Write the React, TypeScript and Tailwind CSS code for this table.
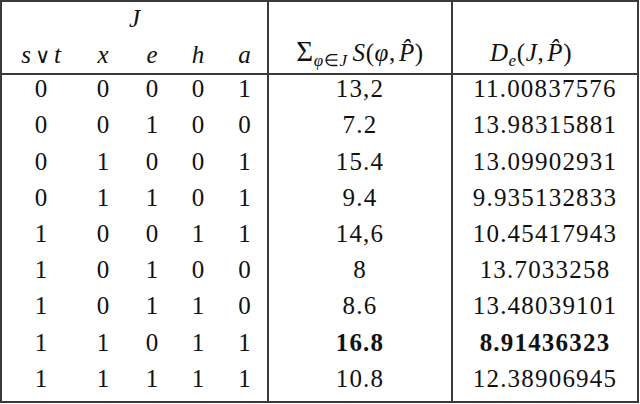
import React from "react";

const rows: { bits: string[]; s: string; d: string; bold?: boolean }[] = [
  { bits: ["0", "0", "0", "0", "1"], s: "13,2", d: "11.00837576" },
  { bits: ["0", "0", "1", "0", "0"], s: "7.2", d: "13.98315881" },
  { bits: ["0", "1", "0", "0", "1"], s: "15.4", d: "13.09902931" },
  { bits: ["0", "1", "1", "0", "1"], s: "9.4", d: "9.935132833" },
  { bits: ["1", "0", "0", "1", "1"], s: "14,6", d: "10.45417943" },
  { bits: ["1", "0", "1", "0", "0"], s: "8", d: "13.7033258" },
  { bits: ["1", "0", "1", "1", "0"], s: "8.6", d: "13.48039101" },
  { bits: ["1", "1", "0", "1", "1"], s: "16.8", d: "8.91436323", bold: true },
  { bits: ["1", "1", "1", "1", "1"], s: "10.8", d: "12.38906945" },
];

function PHat() {
  return <span className="italic">P&#x0302;</span>;
}

export default function App() {
  const grid = "grid grid-cols-[78px_46px_52px_40px_49px]";
  return (
    <div className="w-[640px] h-[404px] bg-white">
      <div className="w-[639px] h-[403px] border-2 border-[#3a3a3a] flex font-['Liberation_Serif',serif] text-[25px] text-[#111] leading-none">
        {/* Left J section */}
        <div className="w-[265px] flex flex-col">
          <div className="h-[73px] border-b-2 border-[#3a3a3a] flex flex-col">
            <div className="h-[35px] pb-[2px] flex items-center justify-center italic">J</div>
            <div className={`${grid} h-[36px] pb-[2px] items-center italic`}>
              <div className="text-center">
                s
                <span className="not-italic mx-[4px] font-['DejaVu_Sans',sans-serif] font-extralight text-[21px]">∨</span>
                t
              </div>
              <div className="text-center">x</div>
              <div className="text-center">e</div>
              <div className="text-center">h</div>
              <div className="text-center pl-[4px]">a</div>
            </div>
          </div>
          <div className="flex-1 flex flex-col">
            {rows.map((r, i) => (
              <div key={i} className={`${grid} flex-1 pb-[9px] items-center`}>
                {r.bits.map((b, j) => (
                  <div key={j} className={j === 4 ? "text-center pl-[4px]" : "text-center"}>
                    {b}
                  </div>
                ))}
              </div>
            ))}
          </div>
        </div>
        {/* Middle sum column */}
        <div className="w-[184px] border-l-2 border-[#3a3a3a] flex flex-col">
          <div className="h-[73px] border-b-2 border-[#3a3a3a] flex flex-col">
            <div className="h-[35px]" />
            <div className="h-[36px] pb-[2px] flex items-center justify-center">
              <span className="whitespace-nowrap tracking-[0.6px]">
                <span className="text-[29px] leading-[0px]">Σ</span>
                <span className="text-[17px] align-[-5px]">
                  <span className="italic">φ</span>∈<span className="italic">J</span>
                </span>
                <span className="italic ml-[5px]">S</span>(<span className="italic">φ</span>,<span className="ml-[3px]"><PHat /></span>)
              </span>
            </div>
          </div>
          <div className="flex-1 flex flex-col">
            {rows.map((r, i) => (
              <div
                key={i}
                className={`flex-1 pb-[9px] flex items-center justify-center tracking-[1.2px] ${r.bold ? "font-bold" : ""}`}
              >
                {r.s}
              </div>
            ))}
          </div>
        </div>
        {/* Right D column */}
        <div className="flex-1 border-l-2 border-[#3a3a3a] flex flex-col">
          <div className="h-[73px] border-b-2 border-[#3a3a3a] flex flex-col">
            <div className="h-[35px]" />
            <div className="h-[36px] pb-[2px] pr-[28px] flex items-center justify-center">
              <span className="whitespace-nowrap tracking-[0.6px]">
                <span className="italic">D</span>
                <span className="italic text-[17px] align-[-5px]">e</span>(<span className="italic">J</span>,<span className="ml-[3px]"><PHat /></span>)
              </span>
            </div>
          </div>
          <div className="flex-1 flex flex-col">
            {rows.map((r, i) => (
              <div
                key={i}
                className={`flex-1 pb-[9px] flex items-center justify-center tracking-[1.2px] ${r.bold ? "font-bold" : ""}`}
              >
                {r.d}
              </div>
            ))}
          </div>
        </div>
      </div>
    </div>
  );
}
